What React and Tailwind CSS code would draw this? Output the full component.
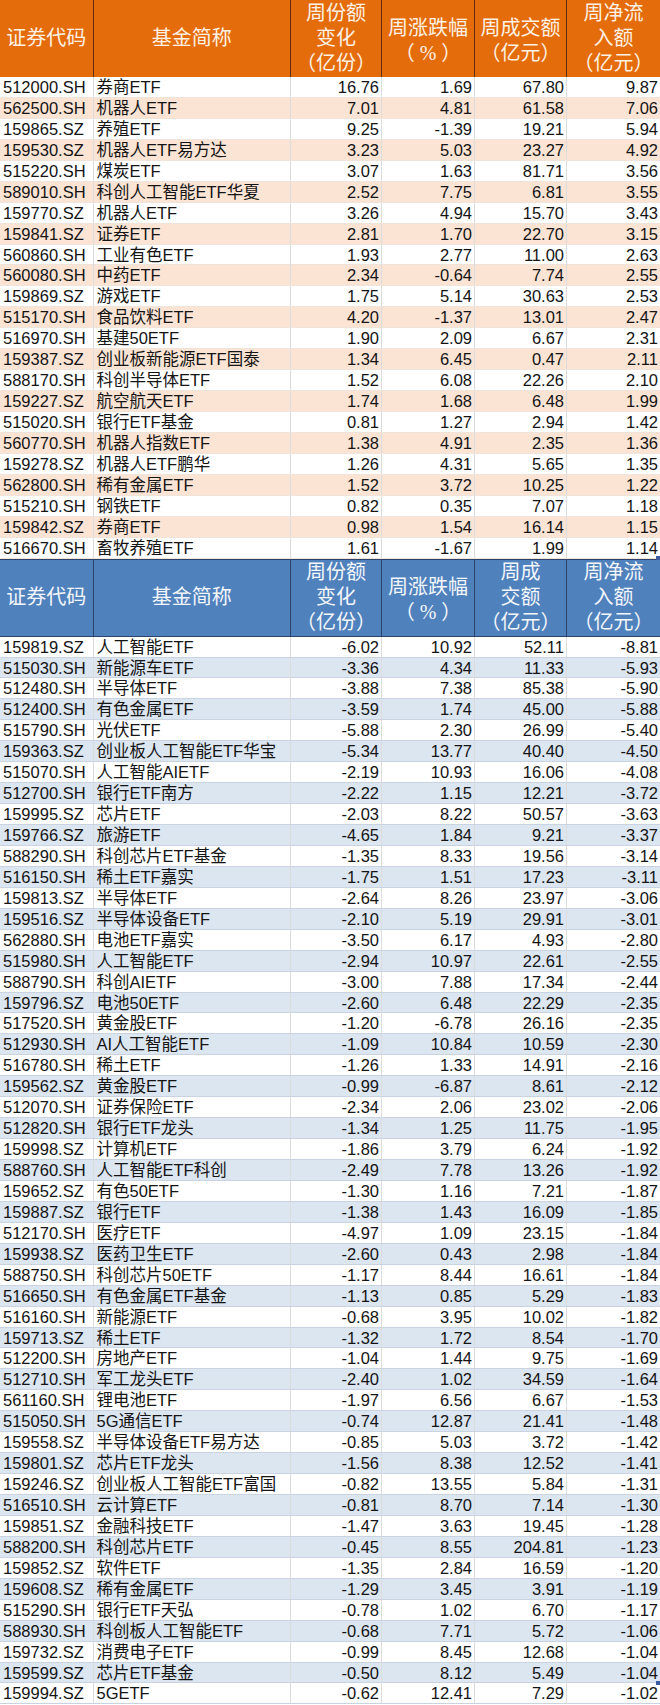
const inflow = [
  ['512000.SH', '券商ETF', '16.76', '1.69', '67.80', '9.87'],
  ['562500.SH', '机器人ETF', '7.01', '4.81', '61.58', '7.06'],
  ['159865.SZ', '养殖ETF', '9.25', '-1.39', '19.21', '5.94'],
  ['159530.SZ', '机器人ETF易方达', '3.23', '5.03', '23.27', '4.92'],
  ['515220.SH', '煤炭ETF', '3.07', '1.63', '81.71', '3.56'],
  ['589010.SH', '科创人工智能ETF华夏', '2.52', '7.75', '6.81', '3.55'],
  ['159770.SZ', '机器人ETF', '3.26', '4.94', '15.70', '3.43'],
  ['159841.SZ', '证券ETF', '2.81', '1.70', '22.70', '3.15'],
  ['560860.SH', '工业有色ETF', '1.93', '2.77', '11.00', '2.63'],
  ['560080.SH', '中药ETF', '2.34', '-0.64', '7.74', '2.55'],
  ['159869.SZ', '游戏ETF', '1.75', '5.14', '30.63', '2.53'],
  ['515170.SH', '食品饮料ETF', '4.20', '-1.37', '13.01', '2.47'],
  ['516970.SH', '基建50ETF', '1.90', '2.09', '6.67', '2.31'],
  ['159387.SZ', '创业板新能源ETF国泰', '1.34', '6.45', '0.47', '2.11'],
  ['588170.SH', '科创半导体ETF', '1.52', '6.08', '22.26', '2.10'],
  ['159227.SZ', '航空航天ETF', '1.74', '1.68', '6.48', '1.99'],
  ['515020.SH', '银行ETF基金', '0.81', '1.27', '2.94', '1.42'],
  ['560770.SH', '机器人指数ETF', '1.38', '4.91', '2.35', '1.36'],
  ['159278.SZ', '机器人ETF鹏华', '1.26', '4.31', '5.65', '1.35'],
  ['562800.SH', '稀有金属ETF', '1.52', '3.72', '10.25', '1.22'],
  ['515210.SH', '钢铁ETF', '0.82', '0.35', '7.07', '1.18'],
  ['159842.SZ', '券商ETF', '0.98', '1.54', '16.14', '1.15'],
  ['516670.SH', '畜牧养殖ETF', '1.61', '-1.67', '1.99', '1.14'],
];

const outflow = [
  ['159819.SZ', '人工智能ETF', '-6.02', '10.92', '52.11', '-8.81'],
  ['515030.SH', '新能源车ETF', '-3.36', '4.34', '11.33', '-5.93'],
  ['512480.SH', '半导体ETF', '-3.88', '7.38', '85.38', '-5.90'],
  ['512400.SH', '有色金属ETF', '-3.59', '1.74', '45.00', '-5.88'],
  ['515790.SH', '光伏ETF', '-5.88', '2.30', '26.99', '-5.40'],
  ['159363.SZ', '创业板人工智能ETF华宝', '-5.34', '13.77', '40.40', '-4.50'],
  ['515070.SH', '人工智能AIETF', '-2.19', '10.93', '16.06', '-4.08'],
  ['512700.SH', '银行ETF南方', '-2.22', '1.15', '12.21', '-3.72'],
  ['159995.SZ', '芯片ETF', '-2.03', '8.22', '50.57', '-3.63'],
  ['159766.SZ', '旅游ETF', '-4.65', '1.84', '9.21', '-3.37'],
  ['588290.SH', '科创芯片ETF基金', '-1.35', '8.33', '19.56', '-3.14'],
  ['516150.SH', '稀土ETF嘉实', '-1.75', '1.51', '17.23', '-3.11'],
  ['159813.SZ', '半导体ETF', '-2.64', '8.26', '23.97', '-3.06'],
  ['159516.SZ', '半导体设备ETF', '-2.10', '5.19', '29.91', '-3.01'],
  ['562880.SH', '电池ETF嘉实', '-3.50', '6.17', '4.93', '-2.80'],
  ['515980.SH', '人工智能ETF', '-2.94', '10.97', '22.61', '-2.55'],
  ['588790.SH', '科创AIETF', '-3.00', '7.88', '17.34', '-2.44'],
  ['159796.SZ', '电池50ETF', '-2.60', '6.48', '22.29', '-2.35'],
  ['517520.SH', '黄金股ETF', '-1.20', '-6.78', '26.16', '-2.35'],
  ['512930.SH', 'AI人工智能ETF', '-1.09', '10.84', '10.59', '-2.30'],
  ['516780.SH', '稀土ETF', '-1.26', '1.33', '14.91', '-2.16'],
  ['159562.SZ', '黄金股ETF', '-0.99', '-6.87', '8.61', '-2.12'],
  ['512070.SH', '证券保险ETF', '-2.34', '2.06', '23.02', '-2.06'],
  ['512820.SH', '银行ETF龙头', '-1.34', '1.25', '11.75', '-1.95'],
  ['159998.SZ', '计算机ETF', '-1.86', '3.79', '6.24', '-1.92'],
  ['588760.SH', '人工智能ETF科创', '-2.49', '7.78', '13.26', '-1.92'],
  ['159652.SZ', '有色50ETF', '-1.30', '1.16', '7.21', '-1.87'],
  ['159887.SZ', '银行ETF', '-1.38', '1.43', '16.09', '-1.85'],
  ['512170.SH', '医疗ETF', '-4.97', '1.09', '23.15', '-1.84'],
  ['159938.SZ', '医药卫生ETF', '-2.60', '0.43', '2.98', '-1.84'],
  ['588750.SH', '科创芯片50ETF', '-1.17', '8.44', '16.61', '-1.84'],
  ['516650.SH', '有色金属ETF基金', '-1.13', '0.85', '5.29', '-1.83'],
  ['516160.SH', '新能源ETF', '-0.68', '3.95', '10.02', '-1.82'],
  ['159713.SZ', '稀土ETF', '-1.32', '1.72', '8.54', '-1.70'],
  ['512200.SH', '房地产ETF', '-1.04', '1.44', '9.75', '-1.69'],
  ['512710.SH', '军工龙头ETF', '-2.40', '1.02', '34.59', '-1.64'],
  ['561160.SH', '锂电池ETF', '-1.97', '6.56', '6.67', '-1.53'],
  ['515050.SH', '5G通信ETF', '-0.74', '12.87', '21.41', '-1.48'],
  ['159558.SZ', '半导体设备ETF易方达', '-0.85', '5.03', '3.72', '-1.42'],
  ['159801.SZ', '芯片ETF龙头', '-1.56', '8.38', '12.52', '-1.41'],
  ['159246.SZ', '创业板人工智能ETF富国', '-0.82', '13.55', '5.84', '-1.31'],
  ['516510.SH', '云计算ETF', '-0.81', '8.70', '7.14', '-1.30'],
  ['159851.SZ', '金融科技ETF', '-1.47', '3.63', '19.45', '-1.28'],
  ['588200.SH', '科创芯片ETF', '-0.45', '8.55', '204.81', '-1.23'],
  ['159852.SZ', '软件ETF', '-1.35', '2.84', '16.59', '-1.20'],
  ['159608.SZ', '稀有金属ETF', '-1.29', '3.45', '3.91', '-1.19'],
  ['515290.SH', '银行ETF天弘', '-0.78', '1.02', '6.70', '-1.17'],
  ['588930.SH', '科创板人工智能ETF', '-0.68', '7.71', '5.72', '-1.06'],
  ['159732.SZ', '消费电子ETF', '-0.99', '8.45', '12.68', '-1.04'],
  ['159599.SZ', '芯片ETF基金', '-0.50', '8.12', '5.49', '-1.04'],
  ['159994.SZ', '5GETF', '-0.62', '12.41', '7.29', '-1.02'],
];

const grid = 'grid grid-cols-[93.5px_197.5px_91px_93px_92px_93px]';

function Header({ blue }) {
  const cols = [
    ['证券代码'],
    ['基金简称'],
    ['周份额', '变化', '（亿份）'],
    ['周涨跌幅', '（ % ）'],
    blue ? ['周成', '交额', '（亿元）'] : ['周成交额', '（亿元）'],
    ['周净流', '入额', '（亿元）'],
  ];
  return (
    <div
      className={`${grid} ${
        blue
          ? 'h-[78px] bg-[#4f81bd] border-y border-[#2c426b] text-[#f3f6fb]'
          : 'h-[77px] bg-[#e46c0a] text-[#fdf1e4]'
      } font-['Liberation_Serif','Noto_Sans_CJK_SC',serif] text-[20px] leading-[25px]`}
    >
      {cols.map((lines, i) => (
        <div
          key={i}
          className={`flex flex-col items-center justify-center ${
            i < 5 ? (blue ? 'border-r border-[#2c426b]' : 'border-r border-[#5e2e0c]') : ''
          } ${lines.length === 2 ? 'pt-1' : ''}`}
        >
          {lines.map((l) => (
            <span key={l} className="whitespace-pre">{l}</span>
          ))}
        </div>
      ))}
    </div>
  );
}

function Row({ r, shaded, blue, handle }) {
  const bg = shaded ? (blue ? 'bg-[#dce6f1]' : 'bg-[#fce4d5]') : 'bg-white';
  const line = blue ? 'border-b border-[#c9d3e2]' : 'border-b border-[#efe3da]';
  return (
    <div className={`${grid} h-[20.95px] ${bg} ${line} text-[16.5px] leading-[20px] text-[#141414]`}>
      <div className="pl-[3px] whitespace-nowrap border-r border-[#dcdcdc]">{r[0]}</div>
      <div className="pl-[3px] whitespace-nowrap border-r border-[#dcdcdc]">{r[1]}</div>
      {r.slice(2).map((v, i) => (
        <div key={i} className={`relative text-right pr-[2px] ${i < 3 ? 'border-r border-[#dcdcdc]' : ''}`}>
          {v}
          {handle && i === 3 && (
            <span className="absolute right-0 bottom-[-2px] w-[4px] h-[4px] bg-[#3a5ba0]" />
          )}
        </div>
      ))}
    </div>
  );
}

export default function App() {
  return (
    <div className="w-[660px] h-[1705px] overflow-hidden bg-white font-['Liberation_Sans','Noto_Sans_CJK_SC',sans-serif]">
      <Header />
      {inflow.map((r, i) => (
        <Row key={r[0] + i} r={r} shaded={i % 2 === 1} handle={i === inflow.length - 1} />
      ))}
      <Header blue />
      {outflow.map((r, i) => (
        <Row key={r[0] + i} r={r} shaded={i % 2 === 1} blue handle={i === outflow.length - 2} />
      ))}
    </div>
  );
}
